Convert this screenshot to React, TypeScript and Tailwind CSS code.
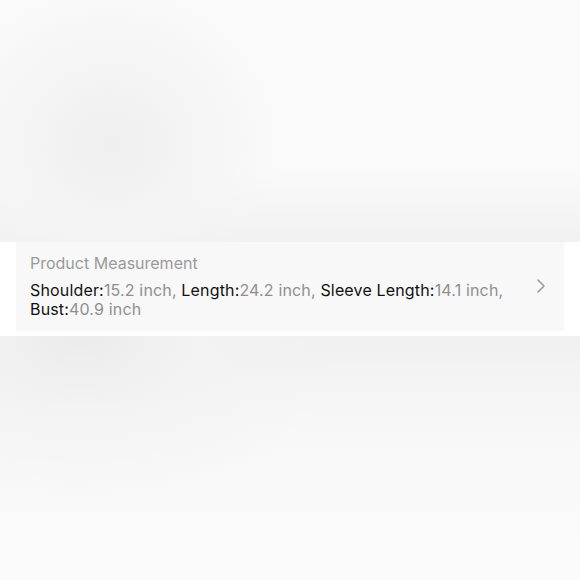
import React from "react";
import { ChevronRight } from "lucide-react";

const measurements = [
  { label: "Shoulder", value: "15.2 inch" },
  { label: "Length", value: "24.2 inch" },
  { label: "Sleeve Length", value: "14.1 inch" },
  { label: "Bust", value: "40.9 inch" },
];

export default function App() {
  return (
    <div className="flex flex-col h-[580px] w-full bg-white font-['Inter','Liberation_Sans',sans-serif]">
      {/* blurred backdrop above */}
      <div className="h-[242px] bg-[radial-gradient(ellipse_170px_160px_at_110px_145px,#efefef_0%,#f4f4f4_45%,rgba(250,250,250,0)_100%),linear-gradient(to_bottom,#fafafa_0%,#fafafa_70%,#f1f1f1_100%)]"></div>

      {/* measurement row */}
      <div className="bg-white pb-[5px]">
        <div className="mx-4 flex items-center bg-[#f8f8f8] pl-[14px] pr-[12px] pt-[11px] pb-[12px]">
          <div className="flex-1 pr-[10px]">
            <p className="text-[16px] leading-[20px] text-[#9a9a9a]">Product Measurement</p>
            <p className="mt-[8px] text-[16px] leading-[19px] tracking-[0.16px] text-[#8f8f8f]">
              {measurements.map((m, i) => (
                <span key={m.label}>
                  <span className="text-[#111111]">{m.label}:</span>
                  {m.value}
                  {i < measurements.length - 1 ? ", " : ""}
                </span>
              ))}
            </p>
          </div>
          <ChevronRight size={24} strokeWidth={1.6} className="text-[#9a9a9a] -mr-[1px]" />
        </div>
      </div>

      {/* blurred backdrop below */}
      <div className="flex-1 bg-[radial-gradient(ellipse_260px_170px_at_80px_0px,#ebebeb_0%,#f3f3f3_45%,rgba(250,250,250,0)_100%),linear-gradient(to_bottom,#f0f0f0_0%,#f8f8f8_40%,#fbfbfb_100%)]"></div>
    </div>
  );
}
